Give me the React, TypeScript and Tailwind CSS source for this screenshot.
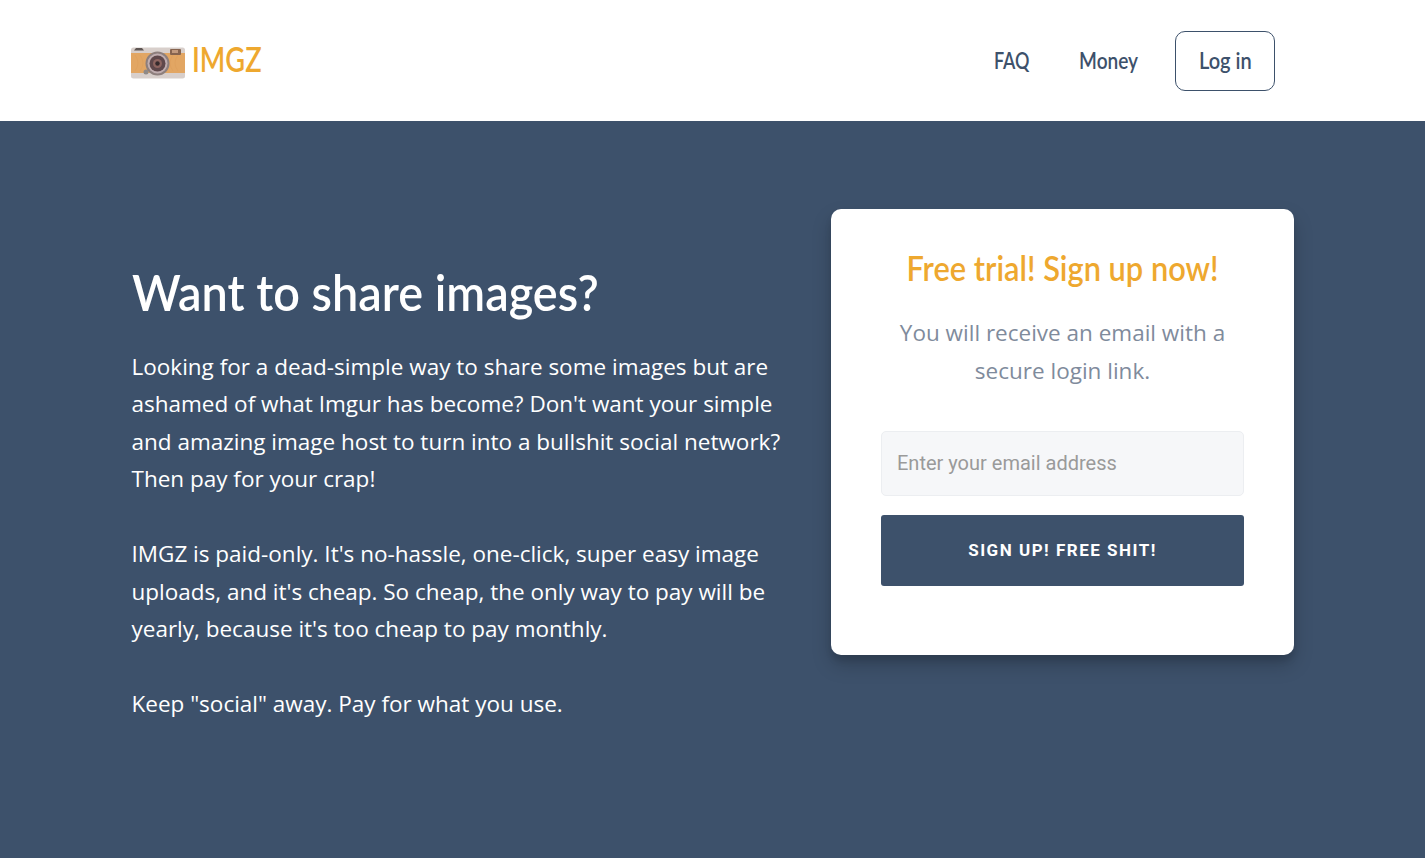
const heading = '[font-family:Lato,sans-serif]'

function CameraLogo() {
  return (
    <svg width="54" height="32" viewBox="0 0 54 32" className="block mt-[5px]">
      <rect x="0" y="0.500" width="54" height="31" rx="2.500" fill="#d8cfcb" />
      <rect x="0" y="6" width="54" height="20" fill="#e2a663" />
      <path d="M4 8 Q10 16 4 24 M9 8 Q15 16 9 24 M42 8 Q36 16 42 24 M47 8 Q41 16 47 24" fill="none" stroke="#d6955140" strokeWidth="1" />
      <path d="M3 3.500 L5 1 H11 L13 3.500 Z" fill="#5f5654" />
      <rect x="39" y="2" width="11" height="6" rx="1" fill="#86644f" />
      <rect x="41" y="3" width="6" height="3" fill="#c29a7e" />
      <circle cx="15" cy="25" r="2.500" fill="#8f8a88" />
      <circle cx="26.500" cy="16.500" r="12" fill="#8d7f7d" />
      <circle cx="26.500" cy="16.500" r="10" fill="#c0aeb0" />
      <circle cx="26.500" cy="16.500" r="8" fill="#5f484b" />
      <circle cx="26.500" cy="16.500" r="4.500" fill="#8e6560" />
      <circle cx="26.500" cy="16.500" r="2.200" fill="#352a2c" />
    </svg>
  )
}

export default function App() {
  return (
    <div className="min-h-screen bg-[#3d516b] font-['Open_Sans',sans-serif]">
      {/* Header */}
      <header className="h-[121px] bg-white pl-[131px] pr-[150px] flex items-center justify-between">
        <div className="flex items-center gap-[7px]">
          <CameraLogo />
          <span className={`${heading} inline-block origin-left scale-x-[0.8] -mt-[3px] text-[34px] font-semibold text-[#eea82f] leading-none`}>IMGZ</span>
        </div>
        <nav className={`${heading} flex items-center text-[23px] font-semibold text-[#3d516b]`}>
          <a className="inline-block scale-x-[0.78] mr-[38px]">FAQ</a>
          <a className="inline-block scale-x-[0.83] mr-[31px]">Money</a>
          <a className="w-[100px] h-[60px] flex items-center justify-center border border-[#3d516b] rounded-[10px]">
            <span className="inline-block scale-x-[0.87]">Log in</span>
          </a>
        </nav>
      </header>

      {/* Hero */}
      <main className="pl-[131.5px] pt-[88px] pb-[120px] flex items-start">
        <section className="w-[699.5px] pt-[50px] pr-[40px] text-white text-[22.5px] leading-[37.45px]">
          <h1 className={`${heading} origin-left scale-x-[0.936] whitespace-nowrap text-[50px] font-semibold leading-[66px] mb-[23px]`}>Want to share images?</h1>
          <p className="mb-[37.45px]">
            Looking for a dead-simple way to share some images but are ashamed of what Imgur has become? Don't want your simple and amazing image host to turn into a bullshit social network? Then pay for your crap!
          </p>
          <p className="mb-[37.45px]">
            IMGZ is paid-only. It's no-hassle, one-click, super easy image uploads, and it's cheap. So cheap, the only way to pay will be yearly, because it's too cheap to pay monthly.
          </p>
          <p>Keep "social" away. Pay for what you use.</p>
        </section>

        <section className="w-[463px] h-[446px] bg-white rounded-[10px] px-[50px] pt-[34px] shadow-[0_10px_20px_rgba(0,0,0,0.19),0_6px_6px_rgba(0,0,0,0.1)] text-center">
          <h2 className={`${heading} scale-x-[0.88] whitespace-nowrap text-[35px] font-semibold text-[#eea82f] leading-[48px]`}>Free trial! Sign up now!</h2>
          <p className="mt-[23px] text-[22.5px] leading-[38px] text-[#7f8b9c]">
            You will receive an email with a secure login link.
          </p>
          <input
            placeholder="Enter your email address"
            className="mt-[41px] block w-full h-[65px] px-[15px] pb-[2px] bg-[#f6f7f9] border border-[#eceef1] rounded-[5px] font-['Roboto',sans-serif] text-[20px] placeholder:text-[#9a9a9a]"
          />
          <button className="mt-[19px] block w-full h-[71px] bg-[#3d516b] rounded-[3px] text-white font-['Roboto',sans-serif] font-bold text-[17px] tracking-[1.5px]">
            SIGN UP! FREE SHIT!
          </button>
        </section>
      </main>
    </div>
  )
}
